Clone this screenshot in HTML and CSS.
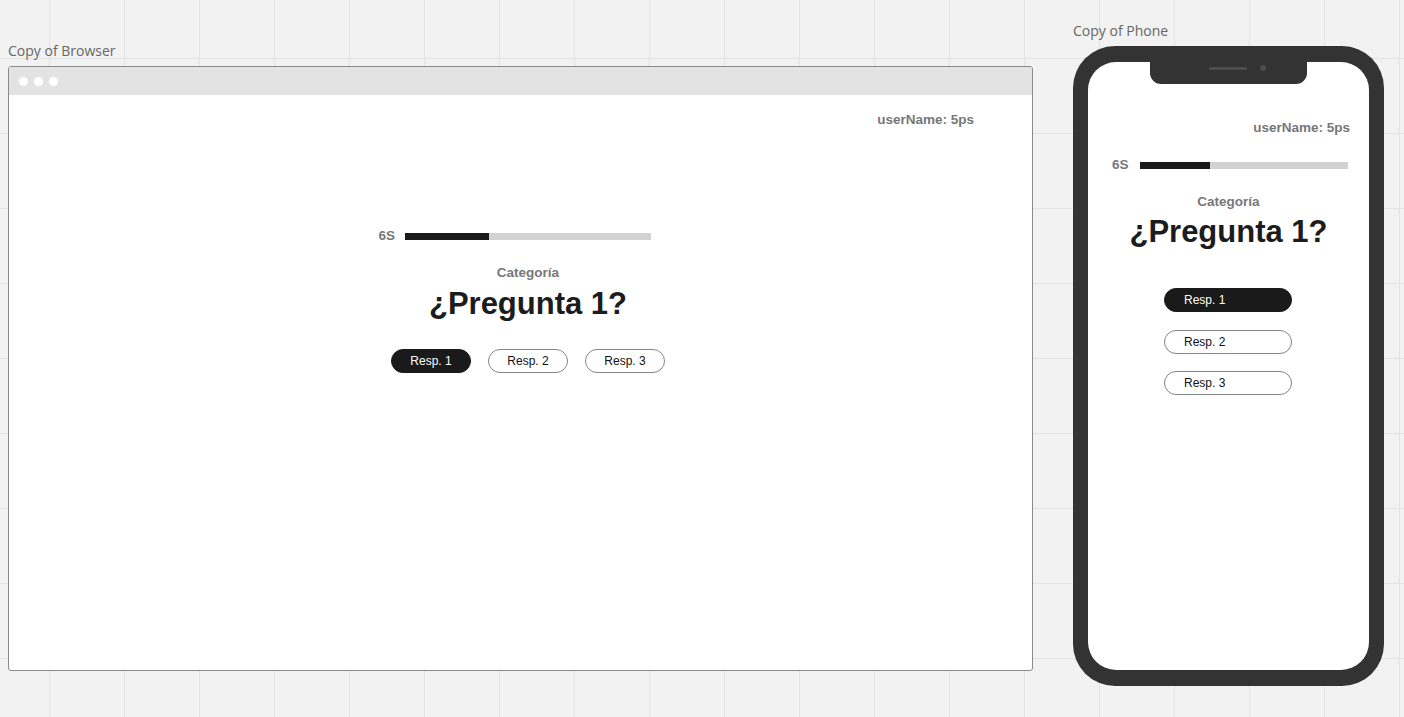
FILE: index.html
```html
<!DOCTYPE html>
<html lang="es">
<head>
<meta charset="utf-8">
<title>Quiz mockups</title>
<link rel="stylesheet" href="styles.css">
</head>
<body>
<div class="canvas">
  <section class="browser-col">
    <div class="frame-label">Copy of Browser</div>
    <div class="window">
      <div class="titlebar">
        <span class="dot"></span><span class="dot"></span><span class="dot"></span>
      </div>
      <div class="page">
        <div class="user">userName: 5ps</div>
        <div class="quiz">
          <div class="timer">
            <span class="timer-label">6S</span>
            <div class="bar"><div class="bar-fill" style="width:34%"></div></div>
          </div>
          <div class="category">Categoría</div>
          <h1 class="question">¿Pregunta 1?</h1>
          <div class="answers">
            <button class="answer selected">Resp. 1</button>
            <button class="answer">Resp. 2</button>
            <button class="answer">Resp. 3</button>
          </div>
        </div>
      </div>
    </div>
  </section>
  <section class="phone-col">
    <div class="frame-label">Copy of Phone</div>
    <div class="phone">
      <div class="screen">
        <div class="notch"><span class="speaker"></span><span class="camera"></span></div>
        <div class="user user-phone">userName: 5ps</div>
        <div class="timer-phone">
          <span class="timer-label">6S</span>
          <div class="bar"><div class="bar-fill" style="width:34%"></div></div>
        </div>
        <div class="category category-phone">Categoría</div>
        <h1 class="question question-phone">¿Pregunta 1?</h1>
        <div class="answers-phone">
          <button class="answer answer-phone selected">Resp. 1</button>
          <button class="answer answer-phone">Resp. 2</button>
          <button class="answer answer-phone">Resp. 3</button>
        </div>
      </div>
    </div>
  </section>
</div>
</body>
</html>
```
FILE: styles.css
```css
* { box-sizing: border-box; }
html, body { margin: 0; padding: 0; }
body {
  width: 1404px;
  height: 717px;
  overflow: hidden;
  background-color: #f2f2f2;
  background-image:
    linear-gradient(to right, #e3e3e3 0, #e3e3e3 1px, transparent 1px),
    linear-gradient(to bottom, #e3e3e3 0, #e3e3e3 1px, transparent 1px);
  background-size: 75px 75px;
  background-position: 49px 58px;
  font-family: "Liberation Sans", Arial, sans-serif;
}
.canvas {
  display: flex;
  align-items: flex-start;
  gap: 40px;
  padding-left: 8px;
}
.frame-label {
  font-family: "Open Sans", sans-serif;
  font-size: 14px;
  line-height: 20px;
  color: #666;
  margin-bottom: 5px;
}
.browser-col { width: 1025px; padding-top: 41px; }
.phone-col { width: 311px; padding-top: 21px; }

.window {
  height: 605px;
  border: 1px solid #8a8a8a;
  border-radius: 3px;
  background: #fff;
  display: flex;
  flex-direction: column;
  overflow: hidden;
}
.titlebar {
  height: 28px;
  background: #e3e3e3;
  display: flex;
  align-items: center;
  gap: 6px;
  padding-left: 10px;
}
.dot {
  width: 9px;
  height: 9px;
  border-radius: 50%;
  background: #fff;
}
.page {
  flex: 1;
  padding-top: 17px;
  display: flex;
  flex-direction: column;
}
.user {
  align-self: flex-end;
  margin-right: 58px;
  font-size: 13.5px;
  line-height: 16px;
  font-weight: bold;
  color: #777;
}
.quiz {
  display: flex;
  flex-direction: column;
  align-items: center;
  padding-left: 15px;
  margin-top: 100px;
}
.timer {
  display: grid;
  grid-template-columns: 1fr 246px 1fr;
  align-items: center;
  width: 400px;
  height: 16px;
}
.timer-label {
  font-size: 13.5px;
  line-height: 16px;
  font-weight: bold;
  color: #777;
  justify-self: end;
  margin-right: 10px;
}
.bar {
  height: 7px;
  background: #d2d2d2;
}
.bar-fill {
  height: 100%;
  background: #1a1a1a;
}
.category {
  margin-top: 21px;
  font-size: 13.5px;
  line-height: 16px;
  font-weight: bold;
  color: #777;
}
.question {
  margin: 5px 0 0;
  font-size: 31px;
  line-height: 36px;
  font-weight: bold;
  color: #1c1c1c;
}
.answers {
  display: flex;
  gap: 17px;
  margin-top: 27px;
}
.answer {
  width: 80px;
  height: 24px;
  border: 1.5px solid #858585;
  border-radius: 12px;
  background: #fff;
  color: #111;
  font-family: "Liberation Sans", Arial, sans-serif;
  font-size: 12px;
  padding: 0;
  text-align: center;
}
.answer.selected {
  background: #1a1a1a;
  border-color: #1a1a1a;
  color: #fff;
}

/* Phone */
.phone {
  width: 311px;
  height: 640px;
  background: #333;
  border-radius: 42px;
  padding: 16px 15px;
}
.screen {
  position: relative;
  height: 100%;
  background: #fff;
  border-radius: 28px;
  display: flex;
  flex-direction: column;
  align-items: center;
  padding-top: 58px;
}
.notch {
  position: absolute;
  top: 0;
  left: 62px;
  width: 157px;
  height: 22px;
  background: #333;
  border-radius: 0 0 11px 11px;
}
.speaker {
  position: absolute;
  left: 59px;
  top: 5px;
  width: 38px;
  height: 3px;
  border-radius: 2px;
  background: #4d4d4d;
}
.camera {
  position: absolute;
  left: 110px;
  top: 3px;
  width: 6px;
  height: 6px;
  border-radius: 50%;
  background: #4d4d4d;
}
.user-phone {
  margin-right: 19px;
}
.timer-phone {
  display: flex;
  align-items: center;
  align-self: stretch;
  margin: 21px 21px 0 24px;
  height: 16px;
}
.timer-phone .timer-label { margin-right: 11px; }
.timer-phone .bar { flex: 1; }
.category-phone { margin-top: 21px; }
.question-phone { margin-top: 4px; }
.answers-phone {
  display: flex;
  flex-direction: column;
  gap: 17.5px;
  margin-top: 38px;
  margin-right: 1px;
}
.answer-phone {
  width: 128px;
  text-align: left;
  padding-left: 19px;
}
```
